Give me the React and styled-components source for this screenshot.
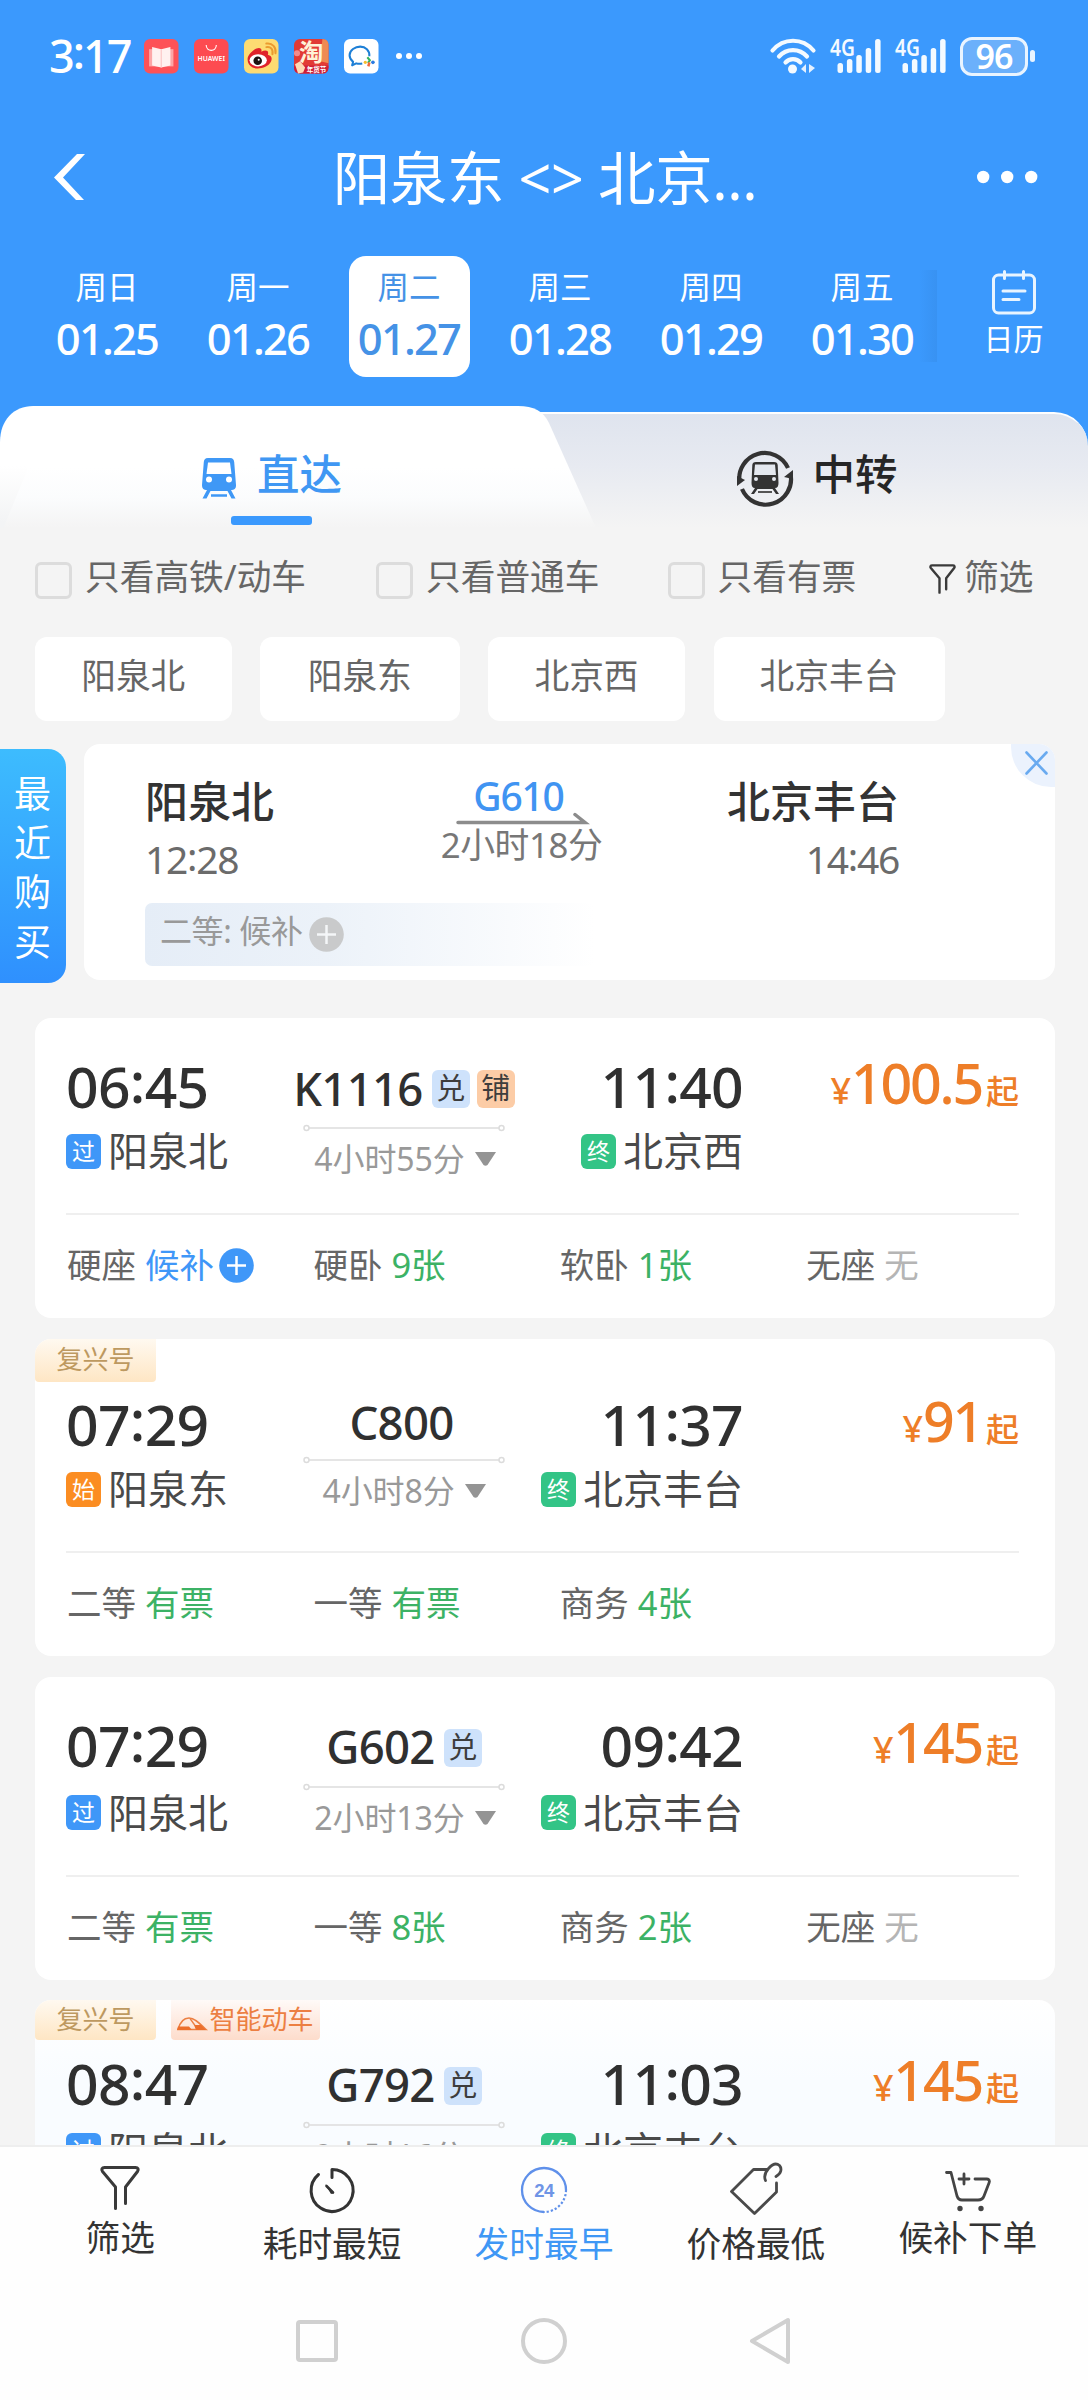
import styled, { createGlobalStyle, css } from "styled-components";

const GlobalStyle = createGlobalStyle`
	* {
		box-sizing: border-box;
	}
	body {
		margin: 0;
		background: #f4f4f4;
		font-family: "Noto Sans", "Noto Sans CJK SC", sans-serif;
		color: #333;
	}
	svg {
		display: block;
		flex: none;
		overflow: visible;
	}
`;

/* ---------- layout ---------- */

const Page = styled.div`
	width: 1088px;
	height: 2400px;
	overflow: hidden;
	display: flex;
	flex-direction: column;
	background: #f4f4f4;
	white-space: nowrap;
`;

const Header = styled.header`
	height: 406px;
	flex: none;
	background: #3b99fd;
	color: #fff;
`;

const StatusBar = styled.div`
	display: flex;
	align-items: center;
	justify-content: space-between;
	height: 112px;
	padding: 0 53px 0 49px;
`;

const StatusSide = styled.div`
	display: flex;
	align-items: center;
`;

const Clock = styled.span`
	width: 95px;
	font-size: 45px;
	line-height: 50px;
	font-weight: 500;
	letter-spacing: -2px;
`;

const AppIcons = styled.div`
	display: flex;
	gap: 15.5px;
	margin-right: 17px;
`;

const Signals = styled.div`
	display: flex;
	gap: 14px;
	margin: 0 14px 0 14px;
`;

const Battery = styled.div`
	width: 68px;
	height: 39px;
	border: 3px solid #e9f4ff;
	border-radius: 12px;
	background: #6bb0fb;
	text-align: center;
	font-size: 34px;
	line-height: 33px;
	font-weight: 600;
	letter-spacing: -1px;
`;

const BatteryNub = styled.i`
	width: 5px;
	height: 12px;
	margin-left: 2px;
	border-radius: 3px;
	background: #e9f4ff;
`;

const TitleBar = styled.div`
	display: flex;
	align-items: center;
	height: 130px;
	padding: 0 50px 0 53px;
`;

const Title = styled.h1`
	flex: 1;
	margin: 2px 0 0 26px;
	font-size: 57.5px;
	line-height: 80px;
	font-weight: 400;
	letter-spacing: -0.4px;
	text-align: center;
`;

const DateBar = styled.div`
	display: flex;
	height: 150px;
	padding: 14px 0 0 46.5px;
`;

const Day = styled.div`
	width: 121px;
	height: 121px;
	margin-right: 30px;
	padding-top: 12px;
	border-radius: 17px;
	text-align: center;
	flex: none;
	${(props) =>
		props.$active &&
		css`
			background: #fff;
			color: #4592e6;
		`}
`;

const Weekday = styled.div`
	font-size: 31.5px;
	line-height: 38px;
`;

const DayDate = styled.div`
	margin-top: 4px;
	font-size: 43.5px;
	line-height: 56px;
	font-weight: 500;
	letter-spacing: -1.8px;
`;

const Calendar = styled.div`
	display: flex;
	align-items: flex-start;
	margin-left: -34px;
	font-size: 30px;
	line-height: 40px;
`;

const CalendarShadow = styled.i`
	width: 18px;
	height: 92px;
	margin: 14px 47px 0 0;
	background: linear-gradient(90deg, rgba(52, 142, 238, 0), #3892f2);
`;

const CalendarLink = styled.div`
	display: flex;
	flex-direction: column;
	align-items: center;
	gap: 4px;
	padding-top: 14px;
`;

/* ---------- tabs ---------- */

const Tabs = styled.div`
	display: flex;
	flex: none;
	height: 122px;
	background: linear-gradient(#3b99fd 60px, #f4f4f4 60px);
`;

const DirectTab = styled.div`
	position: relative;
	z-index: 1;
	width: 596px;
	padding-right: 53px;
	display: flex;
	flex-direction: column;
	align-items: center;
	background: linear-gradient(#fff 50%, #fbfcfd 75%, #f4f4f4);
	clip-path: path(
		"M0 122V36C0 14 14 0 33 0H518C534 0 543 5 549 17L596 122Z"
	);

	&::before {
		content: "";
		position: absolute;
		left: 0;
		bottom: 0;
		width: 34px;
		height: 62px;
		background: linear-gradient(#fff, #f3f4f5 90%);
		clip-path: polygon(0 0, 85% 0, 10% 100%, 0 100%);
	}
`;

const TransferTab = styled.div`
	width: 572px;
	margin: 6px 0 0 -80px;
	padding-left: 30px;
	display: flex;
	justify-content: center;
	border-top: 2px solid #fdfeff;
	border-radius: 0 34px 0 0;
	background: linear-gradient(#dfe4ee, #e7eaf1 45%, #f4f4f4);
`;

const TabLabel = styled.div`
	display: flex;
	align-items: center;
	height: 110px;
	font-size: 42.5px;
	line-height: 60px;
	font-weight: 500;
	color: ${(props) => (props.$active ? "#3f97f3" : "#262626")};

	span {
		margin: ${(props) => (props.$active ? "26px 0 0 20px" : "10px 0 0 18px")};
		height: 60px;
	}
	svg {
		margin-top: ${(props) => (props.$active ? "34px" : "17px")};
	}
`;

const Underline = styled.i`
	width: 81px;
	height: 9px;
	border-radius: 3px;
	background: #3b99fd;
`;

/* ---------- filters ---------- */

const Filters = styled.div`
	display: flex;
	align-items: flex-start;
	flex: none;
	height: 109px;
	padding: 34px 0 0 35px;
	color: #666;
	font-size: 34.7px;
	line-height: 30px;
`;

const CheckItem = styled.label`
	display: flex;
	width: ${(props) => props.$width}px;
	gap: 13px;
`;

const Box = styled.i`
	width: 37px;
	height: 37px;
	border: 3px solid #dcdcdc;
	border-radius: 6px;
`;

const FilterLink = styled.div`
	display: flex;
	gap: 8px;

	svg {
		margin-top: 2px;
	}
`;

const Stations = styled.div`
	display: flex;
	flex: none;
	gap: 28.5px;
	padding-left: 35px;
`;

const StationChip = styled.div`
	width: ${(props) => props.$width}px;
	height: 84px;
	border-radius: 12px;
	background: #fff;
	color: #666;
	font-size: 34.7px;
	line-height: 78px;
	text-align: center;
`;

/* ---------- recent purchase ---------- */

const Recent = styled.section`
	display: flex;
	flex: none;
	margin-top: 23px;
`;

const RecentSide = styled.div`
	width: 66px;
	height: 234px;
	margin: 5px 18px 0 0;
	padding: 20px 15px 0 14px;
	border-radius: 0 18px 18px 0;
	background: linear-gradient(#3dbcfe, #2f90fe);
	color: #fff;
	font-size: 37px;
	line-height: 49.2px;
	white-space: normal;
	word-break: break-all;
`;

const RecentCard = styled.div`
	position: relative;
	width: 971px;
	height: 236px;
	padding: 32px 156px 0 61px;
	border-radius: 16px;
	background: #fff;
`;

const RecentRow = styled.div`
	display: flex;
	justify-content: space-between;
`;

const RecentStop = styled.div`
	text-align: ${(props) => props.$align || "left"};
`;

const RecentName = styled.div`
	font-size: 43px;
	line-height: 52px;
	font-weight: 500;
`;

const RecentTime = styled.div`
	height: 50px;
	margin-top: 6px;
	font-size: 39px;
	line-height: 50px;
	letter-spacing: -1.3px;
	color: #6b6b6b;
`;

const RecentTrain = styled.div`
	display: flex;
	flex-direction: column;
	align-items: center;
	width: 166px;
	margin-right: -42px;
	color: #777;
	font-size: 34.8px;
	line-height: 40px;
	letter-spacing: -0.4px;

	strong {
		height: 37px;
		margin-right: 6px;
		font-size: 39px;
		line-height: 40px;
		font-weight: 500;
		letter-spacing: -1.2px;
		color: #4094f2;
	}
`;

const RecentSeat = styled.div`
	display: flex;
	align-items: center;
	width: 450px;
	height: 63px;
	margin-top: 19px;
	padding-left: 15px;
	gap: 6px;
	border-radius: 7px;
	background: linear-gradient(90deg, #e5edf7, #ecf2f9 40%, #fff);
	color: #999;
	font-size: 32px;
	line-height: 46px;

	span {
		margin-bottom: 7px;
		letter-spacing: -0.4px;
	}
`;

const CloseCorner = styled.div`
	position: absolute;
	top: 0;
	right: 0;
	width: 44px;
	height: 43px;
	padding: 7px 0 0 14px;
	border-radius: 0 16px 0 40px;
	background: #ebf2fd;
`;

/* ---------- train cards ---------- */

const List = styled.div`
	flex: 1;
	min-height: 0;
	overflow: hidden;
	display: flex;
	flex-direction: column;
	gap: 20.5px;
	padding: 35px 33px 0 35px;
`;

const Card = styled.article`
	flex: none;
	border-radius: 16px;
	overflow: hidden;
	background: ${(props) =>
		props.$tinted ? "linear-gradient(#fff, #f9fcff 80px, #f9fcff)" : "#fff"};
`;

const Tags = styled.div`
	display: flex;
	gap: 15px;
	height: ${(props) => props.$height}px;
`;

const Tag = styled.div`
	display: flex;
	align-items: center;
	justify-content: center;
	gap: 2px;
	width: ${(props) => (props.$smart ? 149 : 121)}px;
	border-radius: 0 0 4px 4px;
	background: ${(props) =>
		props.$smart
			? "linear-gradient(#fffaf8, #fddccb)"
			: "linear-gradient(#fff9f0, #fee6c4)"};
	color: ${(props) => (props.$smart ? "#ec7f42" : "#bd9960")};
	font-size: 26px;
	line-height: 36px;
	padding-bottom: 3px;

	svg {
		margin-top: 10px;
	}
`;

const Trip = styled.div`
	display: grid;
	grid-template-columns: 228px 220px 229px 1fr;
	height: ${(props) => props.$height}px;
	margin: ${(props) => (props.$tagged ? 16.5 : 42)}px 36px 0 31px;
	border-bottom: 2px solid #efefef;
`;

const Stop = styled.div`
	display: flex;
	flex-direction: column;
	align-items: ${(props) => props.$align || "flex-start"};
	gap: ${(props) => props.$gap}px;
`;

const Time = styled.div`
	height: 56px;
	font-size: 57px;
	line-height: 53px;
	font-weight: 550;
	letter-spacing: -0.7px;
	color: #303030;
`;

const Colon = styled.span`
	line-height: 0;
	vertical-align: 0.085em;
`;

const Place = styled.div`
	display: flex;
	align-items: center;
	gap: 7px;
	font-size: 40px;
	line-height: 44px;
	color: #4a4a4a;
`;

const badgeColors = { 过: "#3f97f8", 始: "#fb8d22", 终: "#33c486" };

const Badge = styled.span`
	width: 35px;
	height: 35px;
	border-radius: 6px;
	background: ${(props) => badgeColors[props.$kind]};
	color: #fff;
	font-size: 23px;
	line-height: 34px;
	text-align: center;
`;

const Train = styled.div`
	display: flex;
	flex-direction: column;
	align-items: center;
	padding-top: ${(props) => (props.$plain ? 5 : 9)}px;
`;

const TrainNo = styled.div`
	display: flex;
	align-items: center;
	gap: 7px;
	height: 40px;
	font-size: 45.5px;
	line-height: 40px;
	font-weight: 500;
	color: #303030;

	strong {
		margin: 0 ${(props) => (props.$plain ? 5 : 2)}px 3px 0;
		font-weight: 500;
		letter-spacing: -0.7px;
	}
`;

const Mark = styled.span`
	width: 38px;
	height: 38px;
	border-radius: 6px;
	background: ${(props) => (props.$kind === "铺" ? "#fccca6" : "#cee2fb")};
	color: #3d3d3d;
	font-size: 29px;
	line-height: 35px;
	text-align: center;
	font-weight: 400;
`;

const Duration = styled.div`
	display: flex;
	align-items: center;
	gap: 10px;
	margin-top: 9px;
	padding-left: ${(props) => (props.$plain ? 0 : 2)}px;
	font-size: 32px;
	line-height: 36px;
	letter-spacing: -0.1px;
	color: #999;
`;

const Route = styled.div`
	margin-top: ${(props) => (props.$plain ? 13 : 15)}px;
`;

const Price = styled.div`
	height: 50px;
	text-align: right;
	font-size: 55.5px;
	line-height: 46px;
	font-weight: 550;
	letter-spacing: -2.2px;
	color: #ee7e28;

	small {
		font-size: 33px;
		letter-spacing: 0;
		font-weight: 500;
		margin-left: 4px;
	}
	i {
		font-style: normal;
		font-size: 36px;
		margin-right: 2px;
	}
`;

const Seats = styled.div`
	display: grid;
	grid-template-columns: repeat(4, 246.4px);
	padding: 30px 0 33px 32px;
`;

const Seat = styled.div`
	display: flex;
	align-items: center;
	height: 40px;
	font-size: 34.5px;
	line-height: 40px;
	color: #666;
`;

const seatColors = { wait: "#3f97f8", ok: "#3cb265", none: "#b5b5b5" };

const SeatValue = styled.span`
	margin: 0 5px 0 9px;
	color: ${(props) => seatColors[props.$state]};
`;

/* ---------- bottom ---------- */

const Footer = styled.footer`
	flex: none;
	height: 255px;
	border-top: 2px solid #eee;
	background: #fefefe;
`;

const SortBar = styled.nav`
	display: flex;
	justify-content: center;
	height: 140px;
`;

const SortItem = styled.div`
	display: flex;
	flex-direction: column;
	align-items: center;
	width: 211.9px;
	padding-top: 15px;
	font-size: 34.7px;
	line-height: 44px;
	color: ${(props) => (props.$active ? "#3f97f5" : "#333")};

	svg {
		margin-bottom: ${(props) => (props.$raised ? 2 : 8)}px;
	}
`;

const SystemNav = styled.div`
	display: flex;
	justify-content: center;
	gap: 181px;
	padding-top: 31px;
`;

/* ---------- icons ---------- */

function BookApp() {
	return (
		<svg width='34.5' height='34.5' viewBox='0 0 34 34'>
			<rect width='34' height='34' rx='6' fill='#fd5257' />
			<path d='M5 10h24v17H5z' fill='#fda6a6' />
			<path d='M8 8l9 2 9-2v18l-9 2-9-2z' fill='#fff1ef' />
			<path d='M17 10v18' stroke='#fbc9c7' strokeWidth='1.2' />
		</svg>
	);
}

function HuaweiApp() {
	return (
		<svg width='34.5' height='34.5' viewBox='0 0 34 34'>
			<rect width='34' height='34' rx='6' fill='#fd4b51' />
			<path
				d='M12 6c0 7 10 7 10 0'
				fill='none'
				stroke='#fff'
				strokeWidth='1.1'
			/>
			<text
				x='17'
				y='22'
				fontSize='7.4'
				fontWeight='600'
				fill='#fff'
				textAnchor='middle'
				textLength='27'
				lengthAdjust='spacingAndGlyphs'
			>
				HUAWEI
			</text>
		</svg>
	);
}

function WeiboApp() {
	return (
		<svg width='34.5' height='34.5' viewBox='0 0 34 34'>
			<rect width='34' height='34' rx='6' fill='#fddb72' />
			<path
				d='M22 8c4-1 7 2 6 7M22 4.500c6-1 10 4 9 9.500'
				fill='none'
				stroke='#eb9b2f'
				strokeWidth='2'
				strokeLinecap='round'
			/>
			<path
				d='M3.500 20c0-5 8-12 12-11 2 .5 2 2 1.500 3.500 4-2 8-1.500 6.500 3 4 1 4.500 4 3 7-3 6-13 8-18 5.500-3-1.500-5-4-5-8z'
				fill='#e0232b'
			/>
			<ellipse cx='14' cy='21' rx='8.500' ry='6' fill='#fff' />
			<circle cx='13.500' cy='21.500' r='4.200' fill='#1c1312' />
			<circle cx='14.500' cy='20.500' r='1' fill='#fff' />
		</svg>
	);
}

function TaobaoApp() {
	return (
		<svg width='34.5' height='34.5' viewBox='0 0 34 34'>
			<rect width='34' height='34' rx='6' fill='#e23a35' />
			<path d='M28 0q6 0 6 6v18l-8-2z' fill='#ef8a52' />
			<circle cx='3' cy='14' r='3' fill='#f58a8a' />
			<path d='M0 26h34v2q0 6-6 6H6q-6 0-6-6z' fill='#d01f36' />
			<path d='M1 25l5-3 5 6-2 5-5 1z' fill='#ffd9b4' />
			<text
				x='17'
				y='22'
				fontSize='24'
				fontWeight='700'
				fill='#fff2d8'
				textAnchor='middle'
			>
				淘
			</text>
			<text x='12.500' y='32.500' fontSize='6.500' fontWeight='700' fill='#fff'>
				年货节
			</text>
		</svg>
	);
}

function WecomApp() {
	return (
		<svg width='34.5' height='34.5' viewBox='0 0 34 34'>
			<rect width='34' height='34' rx='6' fill='#fff' />
			<path
				d='M25 17c.5-6-4-9.500-9-9.500S5.500 11 5.500 16c0 3 1.500 5 3.500 6.500L8 26l4-2c2 .6 4 .6 6 .2'
				fill='none'
				stroke='#1d7fd6'
				strokeWidth='2'
				strokeLinejoin='round'
			/>
			<path d='M23 18l2.500 3-2 2.500' stroke='#35b55c' strokeWidth='2' fill='none' />
			<path d='M24 27l1-4' stroke='#f2693b' strokeWidth='2.500' />
			<circle cx='21' cy='23' r='1.600' fill='#f6bd2c' />
			<circle cx='28.500' cy='23' r='1.800' fill='#2b7be0' />
		</svg>
	);
}

function Dots({ width, height, r, gap }) {
	return (
		<svg width={width} height={height}>
			{[0, 1, 2].map((i) => (
				<circle key={i} cx={r + i * gap} cy={height / 2} r={r} fill='#fff' />
			))}
		</svg>
	);
}

function Wifi() {
	return (
		<svg width='46' height='36' viewBox='0 0 46 36' fill='none'>
			<g stroke='#f4faff' strokeWidth='4.200' strokeLinecap='round'>
				<path d='M2.500 12.500c11-13 30-13 41 0' />
				<path d='M9 18.500c7.500-8.500 20.500-8.500 28 0' />
				<path d='M15.500 24.500c4-4.500 11-4.500 15 0' />
			</g>
			<circle cx='22.500' cy='31' r='4.500' fill='#f4faff' />
			<path d='M36 26v9l-5-4zM39 35v-9l6 4z' fill='#e4f1ff' />
		</svg>
	);
}

function Signal() {
	return (
		<svg width='51' height='36' viewBox='0 0 51 36'>
			<text
				x='0'
				y='17.500'
				fontSize='22.500'
				fontWeight='600'
				fill='#f4faff'
				textLength='25'
				lengthAdjust='spacingAndGlyphs'
			>
				4G
			</text>
			{[24, 20, 16, 9, 0].map((y, i) => (
				<rect
					key={y}
					x={7.5 + i * 9.4}
					y={y + 1}
					width='5.500'
					height={34 - y}
					rx='2.500'
					fill='#f4faff'
				/>
			))}
		</svg>
	);
}

function Back() {
	return (
		<svg width='34' height='48' viewBox='0 0 34 48' fill='#fff'>
			<path d='M24 1h8L10 24.500 31 47h-8L1 24.500z' />
		</svg>
	);
}

function CalendarIcon() {
	return (
		<svg width='44' height='45' viewBox='0 0 44 45' fill='none'>
			<g stroke='#e8f4ff' strokeWidth='3' strokeLinecap='round'>
				<rect x='1.500' y='5' width='41' height='38' rx='5' />
				<path d='M12.500 1.500v7M31.500 1.500v7M11 21h22M11 29.500h16' />
			</g>
		</svg>
	);
}

function TrainIcon() {
	return (
		<svg width='36' height='41' viewBox='0 0 36 41'>
			<path
				d='M7 0h22c3 0 4 2 4.200 4L35 27c.2 4-2 5-5 5l4.500 8.500h-4L26.500 33h-17l-4 7.500h-4L6 32c-3 0-5-1-5-5L2.800 4C3 2 4 0 7 0z'
				fill='#3f98f6'
			/>
			<path d='M7 4.500h22l1.500 11.500h-25z' fill='#fff' />
			<circle cx='8' cy='21.500' r='3' fill='#fff' />
			<circle cx='28' cy='21.500' r='3' fill='#fff' />
			<path d='M10 37.500h16' stroke='#3f98f6' strokeWidth='2.500' />
		</svg>
	);
}

function TransferIcon() {
	return (
		<svg width='58' height='58' viewBox='0 0 58 58'>
			<g fill='none' stroke='#333' strokeWidth='4.200'>
				<path d='M3.500 33A25.500 25.500 0 0 1 52 19' />
				<path d='M54.500 25A25.500 25.500 0 0 1 6 40' />
			</g>
			<path d='M1 37V27l8 4zM57 21v9l-9-2z' fill='#333' />
			<path
				d='M20 13h18c2.500 0 3.500 1 3.700 3l.8 18c0 3-1 5-3.500 5l4 6h-3l-3.500-5h-15L18 45h-3l4-6c-2.500 0-3.500-2-3.500-5l.8-18c.2-2 1.200-3 3.700-3z'
				fill='#333'
			/>
			<path d='M19 15.500h20l1 10.500H18z' fill='#e4e8ef' />
			<circle cx='20' cy='30' r='2' fill='#e4e8ef' />
			<circle cx='38' cy='30' r='2' fill='#e4e8ef' />
			<path d='M22 43h14' stroke='#555' strokeWidth='2' />
		</svg>
	);
}

function Funnel({ width, height, stroke }) {
	return (
		<svg
			width={width}
			height={height}
			viewBox='0 0 40 45'
			fill='none'
			stroke='#3a3a3a'
			strokeWidth={stroke}
			strokeLinecap='round'
			strokeLinejoin='round'
		>
			<path d='M15.500 43V21.500L2.500 6C1 4 2 2 4.500 2h31c2.500 0 3.500 2 2 4L25.500 21.500V38' />
		</svg>
	);
}

function Arrow() {
	return (
		<svg width='132' height='12' viewBox='0 0 132 12' fill='none'>
			<path
				d='M2 9.500h127L119 1.500'
				stroke='#8c8c8c'
				strokeWidth='3.500'
				strokeLinecap='round'
			/>
		</svg>
	);
}

function Plus({ color, line = "#fff" }) {
	return (
		<svg width='35' height='35' viewBox='0 0 35 35'>
			<circle cx='17.500' cy='17.500' r='17.300' fill={color} />
			<path d='M17.500 8v19M8 17.500h19' stroke={line} strokeWidth='2.500' />
		</svg>
	);
}

function Close() {
	return (
		<svg width='23' height='24' viewBox='0 0 23 24'>
			<path
				d='M1.500 1.500l20 21M21.500 1.500l-20 21'
				stroke='#69aaf0'
				strokeWidth='2.600'
				strokeLinecap='round'
			/>
		</svg>
	);
}

function RouteLine() {
	return (
		<svg width='202' height='8' viewBox='0 0 202 8' fill='none'>
			<path d='M6 4h190' stroke='#dcdcdc' strokeWidth='1.500' />
			<circle cx='3.500' cy='4' r='2.500' stroke='#dcdcdc' strokeWidth='1.500' />
			<circle cx='198.500' cy='4' r='2.500' stroke='#dcdcdc' strokeWidth='1.500' />
		</svg>
	);
}

function Triangle() {
	return (
		<svg width='21' height='14' viewBox='0 0 21 14'>
			<path d='M0 0h21L12.500 13q-2 1.500-4 0z' fill='#949494' />
		</svg>
	);
}

function SmartTrain() {
	return (
		<svg width='30' height='14' viewBox='0 0 30 14'>
			<path
				d='M1 12.500C3 5 7 1 12 1c6 0 11 6 17 11.500z'
				fill='none'
				stroke='#ec7f42'
				strokeWidth='1.600'
			/>
			<path d='M1 9.500h11l3 3.500H0zM17 8h7l5 5H19z' fill='#ec6f2c' />
			<path d='M13 1.500l5 7' stroke='#ec7f42' strokeWidth='1.300' fill='none' />
		</svg>
	);
}

function TimerIcon() {
	return (
		<svg width='46' height='52' viewBox='0 0 46 52' fill='none' stroke='#333'>
			<path
				d='M9.500 12.500A21 21 0 1 0 23 7.500V15.500'
				strokeWidth='3'
				strokeLinecap='round'
				strokeLinejoin='round'
			/>
			<path d='M16 22l9 9-3 1z' fill='#333' stroke='none' />
			<path d='M17.500 24l6.500 6.500' strokeWidth='2.600' strokeLinecap='round' />
		</svg>
	);
}

function DayIcon() {
	return (
		<svg width='48' height='52' viewBox='0 0 48 52' fill='none'>
			<path d='M24 50A22 22 0 1 1 46 28' stroke='#5f90ea' strokeWidth='2.300' />
			<path
				d='M46 28A22 22 0 0 1 24 50'
				stroke='#5f90ea'
				strokeWidth='2.200'
				strokeDasharray='2.200 2'
			/>
			<text
				x='24'
				y='34.500'
				fontSize='18.500'
				fontWeight='600'
				fill='#6f95e6'
				textAnchor='middle'
				fontFamily='Liberation Sans'
				letterSpacing='-.6'
			>
				24
			</text>
		</svg>
	);
}

function PriceTagIcon() {
	return (
		<svg
			width='54'
			height='52'
			viewBox='0 0 54 52'
			fill='none'
			stroke='#4a4a4a'
			strokeWidth='2.800'
			strokeLinecap='round'
			strokeLinejoin='round'
		>
			<path d='M38 7.500H24.500L2.500 29.500 25.500 51.500 47.500 30V21' />
			<path d='M36.500 18.500c-2-4.500-.5-8 3-12 4-4.500 8-5.500 11-3 2.500 3 2 8-3.500 11' />
		</svg>
	);
}

function CartIcon() {
	return (
		<svg
			width='46'
			height='52'
			viewBox='0 0 46 52'
			fill='none'
			stroke='#444'
			strokeWidth='2.800'
			strokeLinecap='round'
			strokeLinejoin='round'
		>
			<path d='M1.500 10.500H6L12 34c1 3 2.500 4 5 4h16c3 0 5-1 6-4l5-13c1-2 0-4-2-4H30' />
			<path d='M19 12v10M14 17h10' />
			<circle cx='15' cy='46.500' r='1.700' fill='#444' strokeWidth='2' />
			<circle cx='36' cy='46.500' r='1.700' fill='#444' strokeWidth='2' />
		</svg>
	);
}

/* ---------- data ---------- */

const days = [
	["周日", "01.25"],
	["周一", "01.26"],
	["周二", "01.27"],
	["周三", "01.28"],
	["周四", "01.29"],
	["周五", "01.30"],
];

const checks = [
	["只看高铁/动车", 341],
	["只看普通车", 291.5],
	["只看有票", 261.5],
];

const stations = [
	["阳泉北", 196.5],
	["阳泉东", 199.5],
	["北京西", 197],
	["北京丰台", 231],
];

const trains = [
	{
		no: "K1116",
		marks: ["兑", "铺"],
		start: "06:45",
		end: "11:40",
		from: ["过", "阳泉北"],
		to: ["终", "北京西"],
		duration: "4小时55分",
		price: "100.5",
		gap: 13,
		seats: [
			["硬座", "候补", "wait"],
			["硬卧", "9张", "ok"],
			["软卧", "1张", "ok"],
			["无座", "无", "none"],
		],
	},
	{
		no: "C800",
		tags: ["复兴号"],
		tagHeight: 43,
		marks: [],
		start: "07:29",
		end: "11:37",
		from: ["始", "阳泉东"],
		to: ["终", "北京丰台"],
		duration: "4小时8分",
		price: "91",
		gap: 13,
		seats: [
			["二等", "有票", "ok"],
			["一等", "有票", "ok"],
			["商务", "4张", "ok"],
		],
	},
	{
		no: "G602",
		marks: ["兑"],
		start: "07:29",
		end: "09:42",
		from: ["过", "阳泉北"],
		to: ["终", "北京丰台"],
		duration: "2小时13分",
		price: "145",
		gap: 16,
		seats: [
			["二等", "有票", "ok"],
			["一等", "8张", "ok"],
			["商务", "2张", "ok"],
			["无座", "无", "none"],
		],
	},
	{
		no: "G792",
		tags: ["复兴号", "智能动车"],
		tagHeight: 40,
		marks: ["兑"],
		start: "08:47",
		end: "11:03",
		from: ["过", "阳泉北"],
		to: ["终", "北京丰台"],
		duration: "2小时16分",
		price: "145",
		gap: 16,
		seats: [],
	},
];

/* ---------- components ---------- */

function ClockTime({ value }) {
	const [hour, minute] = value.split(":");
	return (
		<>
			{hour}
			<Colon>:</Colon>
			{minute}
		</>
	);
}

function TrainCard({ train }) {
	const plain = train.marks.length === 0;
	const tagged = Boolean(train.tags);

	return (
		<Card $tinted={train.tags?.length > 1}>
			{tagged && (
				<Tags $height={train.tagHeight}>
					{train.tags.map((tag) => (
						<Tag key={tag} $smart={tag === "智能动车"}>
							{tag === "智能动车" && <SmartTrain />}
							{tag}
						</Tag>
					))}
				</Tags>
			)}
			<Trip $height={142 + train.gap} $tagged={tagged}>
				<Stop $gap={train.gap}>
					<Time>
						<ClockTime value={train.start} />
					</Time>
					<Place>
						<Badge $kind={train.from[0]}>{train.from[0]}</Badge>
						{train.from[1]}
					</Place>
				</Stop>
				<Train $plain={plain}>
					<TrainNo $plain={plain}>
						<strong>{train.no}</strong>
						{train.marks.map((mark) => (
							<Mark key={mark} $kind={mark}>
								{mark}
							</Mark>
						))}
					</TrainNo>
					<Route $plain={plain}>
						<RouteLine />
					</Route>
					<Duration $plain={plain}>
						{train.duration}
						<Triangle />
					</Duration>
				</Train>
				<Stop $gap={train.gap} $align='flex-end'>
					<Time>
						<ClockTime value={train.end} />
					</Time>
					<Place>
						<Badge $kind={train.to[0]}>{train.to[0]}</Badge>
						{train.to[1]}
					</Place>
				</Stop>
				<Price>
					<i>¥</i>
					{train.price}
					<small>起</small>
				</Price>
			</Trip>
			<Seats>
				{train.seats.map(([name, value, state]) => (
					<Seat key={name}>
						{name}
						<SeatValue $state={state}>{value}</SeatValue>
						{state === "wait" && <Plus color='#3f97f8' />}
					</Seat>
				))}
			</Seats>
		</Card>
	);
}

function App() {
	return (
		<Page>
			<GlobalStyle />
			<Header>
				<StatusBar>
					<StatusSide>
						<Clock>
							<ClockTime value='3:17' />
						</Clock>
						<AppIcons>
							<BookApp />
							<HuaweiApp />
							<WeiboApp />
							<TaobaoApp />
							<WecomApp />
						</AppIcons>
						<Dots width={27} height={8} r={3} gap={10} />
					</StatusSide>
					<StatusSide>
						<Wifi />
						<Signals>
							<Signal />
							<Signal />
						</Signals>
						<Battery>96</Battery>
						<BatteryNub />
					</StatusSide>
				</StatusBar>
				<TitleBar>
					<Back />
					<Title>阳泉东 &lt;&gt; 北京...</Title>
					<Dots width={61} height={14} r={6.2} gap={24} />
				</TitleBar>
				<DateBar>
					{days.map(([name, date]) => (
						<Day key={date} $active={date === "01.27"}>
							<Weekday>{name}</Weekday>
							<DayDate>{date}</DayDate>
						</Day>
					))}
					<Calendar>
						<CalendarShadow />
						<CalendarLink>
							<CalendarIcon />
							日历
						</CalendarLink>
					</Calendar>
				</DateBar>
			</Header>

			<Tabs>
				<DirectTab>
					<TabLabel $active>
						<TrainIcon />
						<span>直达</span>
					</TabLabel>
					<Underline />
				</DirectTab>
				<TransferTab>
					<TabLabel>
						<TransferIcon />
						<span>中转</span>
					</TabLabel>
				</TransferTab>
			</Tabs>

			<Filters>
				{checks.map(([label, width]) => (
					<CheckItem key={label} $width={width}>
						<Box />
						{label}
					</CheckItem>
				))}
				<FilterLink>
					<Funnel width={27} height={30} stroke={3.6} />
					筛选
				</FilterLink>
			</Filters>

			<Stations>
				{stations.map(([name, width]) => (
					<StationChip key={name} $width={width}>
						{name}
					</StationChip>
				))}
			</Stations>

			<Recent>
				<RecentSide>最近购买</RecentSide>
				<RecentCard>
					<RecentRow>
						<RecentStop>
							<RecentName>阳泉北</RecentName>
							<RecentTime>
								<ClockTime value='12:28' />
							</RecentTime>
						</RecentStop>
						<RecentTrain>
							<strong>G610</strong>
							<Arrow />
							2小时18分
						</RecentTrain>
						<RecentStop $align='right'>
							<RecentName>北京丰台</RecentName>
							<RecentTime>
								<ClockTime value='14:46' />
							</RecentTime>
						</RecentStop>
					</RecentRow>
					<RecentSeat>
						<span>二等: 候补</span>
						<Plus color='#c9cacb' line='#f4f6f8' />
					</RecentSeat>
					<CloseCorner>
						<Close />
					</CloseCorner>
				</RecentCard>
			</Recent>

			<List>
				{trains.map((train) => (
					<TrainCard key={train.no} train={train} />
				))}
			</List>

			<Footer>
				<SortBar>
					<SortItem $raised>
						<Funnel width={40} height={52} stroke={3} />
						筛选
					</SortItem>
					<SortItem>
						<TimerIcon />
						耗时最短
					</SortItem>
					<SortItem $active>
						<DayIcon />
						发时最早
					</SortItem>
					<SortItem>
						<PriceTagIcon />
						价格最低
					</SortItem>
					<SortItem $raised>
						<CartIcon />
						候补下单
					</SortItem>
				</SortBar>
				<SystemNav>
					<svg width='46' height='46' fill='none' stroke='#d0d0d0' strokeWidth='4'>
						<rect x='4' y='4' width='38' height='38' rx='2' />
					</svg>
					<svg width='46' height='46' fill='none' stroke='#d0d0d0' strokeWidth='4'>
						<circle cx='23' cy='23' r='21' />
					</svg>
					<svg
						width='46'
						height='46'
						fill='none'
						stroke='#d0d0d0'
						strokeWidth='4'
						strokeLinejoin='round'
					>
						<path d='M4 23L40 2v42z' />
					</svg>
				</SystemNav>
			</Footer>
		</Page>
	);
}

export default App;
